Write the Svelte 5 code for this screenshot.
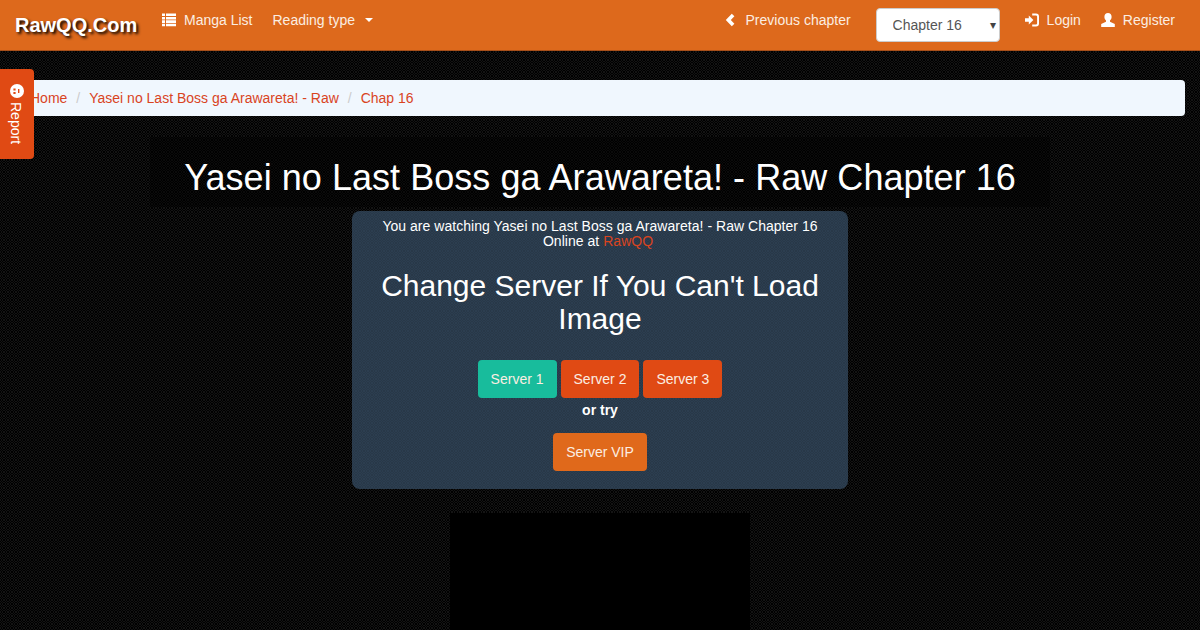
<script>
	let servers = ['Server 1', 'Server 2', 'Server 3'];
	let activeServer = $state(0);
	let chapter = $state('16');
</script>

<header class="navbar">
	<a class="brand" href="#top">RawQQ.Com</a>
	<nav class="nav">
		<a href="#list">
			<svg class="icon" viewBox="0 0 14 14"><path d="M0 .5h3v2.600H0zM4 .5h10v2.600H4zM0 3.900h3v2.600H0zM4 3.900h10v2.600H4zM0 7.300h3v2.600H0zM4 7.300h10v2.600H4zM0 10.700h3v2.600H0zM4 10.700h10v2.600H4z" /></svg>
			Manga List
		</a>
		<a href="#type">Reading type <span class="caret"></span></a>
	</nav>
	<nav class="nav right">
		<a href="#prev">
			<svg class="icon" viewBox="0 0 14 14"><path d="M7.800.8 1.800 7l6 6.200 2.600-2.500L6.800 7l3.600-3.700z" /></svg>
			Previous chapter
		</a>
		<div class="select-wrap">
			<select bind:value={chapter}>
				<option value="16">Chapter 16</option>
				<option value="15">Chapter 15</option>
			</select>
		</div>
		<a href="#login">
			<svg class="icon" viewBox="0 0 14 14"><path d="M0 5.200h3.800V2.500L8.400 7l-4.600 4.500V8.800H0z" /><path d="M7.200.6h3.800A3 3 0 0 1 14 3.600v6.800a3 3 0 0 1-3 3H7.200v-1.900h3.600a1.300 1.300 0 0 0 1.300-1.300V3.800a1.300 1.300 0 0 0-1.300-1.300H7.200z" /></svg>
			Login
		</a>
		<a href="#register">
			<svg class="icon" viewBox="0 0 14 14"><path d="M7 0c2.200 0 3.600 1.600 3.600 3.800 0 1.600-.7 2.900-1.600 3.700v1.200l4.800 2.200v3H.2v-3L5 8.700V7.500C4.100 6.700 3.400 5.400 3.400 3.800 3.400 1.600 4.800 0 7 0z" /></svg>
			Register
		</a>
	</nav>
</header>

<a class="report" href="#report">
	<svg class="face" viewBox="0 0 14 14"><circle cx="7" cy="7" r="7" fill="#fff" /><path d="M3.400 4.500h2.200v2H3.400zM3.400 8h2.200v2H3.400zM8 5h1.400v4H8z" fill="#e04a14" /></svg>
	<span>Report</span>
</a>

<main class="content">
	<ol class="breadcrumb">
		<li><a href="#home">Home</a></li>
		<li><a href="#manga">Yasei no Last Boss ga Arawareta! - Raw</a></li>
		<li><a href="#chap">Chap 16</a></li>
	</ol>

	<h1 class="title">Yasei no Last Boss ga Arawareta! - Raw Chapter 16</h1>

	<section class="panel">
		<p>You are watching Yasei no Last Boss ga Arawareta! - Raw Chapter 16 Online at <a href="#site">RawQQ</a>&nbsp;</p>
		<h2>Change Server If You Can't Load Image</h2>
		<div class="servers">
			{#each servers as server, i}
				<button class:active={activeServer === i} onclick={() => (activeServer = i)}>{server}</button>
			{/each}
		</div>
		<strong>or try</strong>
		<button class="vip">Server VIP</button>
	</section>

	<div class="page-image"></div>
</main>

<style>
	:global(body) {
		margin: 0;
		overflow: hidden;
		color: #fff;
		font: 14px/20px Helvetica, Arial, 'Liberation Sans', sans-serif;
		background: #000 url("data:image/svg+xml,%3Csvg xmlns='http://www.w3.org/2000/svg' width='8' height='8'%3E%3Cpath d='M0 4L4 0M0 2L2 0M2 4L4 2M4 8L8 4M4 6L6 4M6 8L8 6M4 0L8 4M6 0L8 2M4 2L6 4M0 4L4 8M2 4L4 6M0 6L2 8' stroke='%23fff' stroke-opacity='.08' fill='none'/%3E%3C/svg%3E");
	}

	a {
		text-decoration: none;
		color: inherit;
	}

	.navbar {
		display: flex;
		align-items: flex-start;
		height: 50px;
		background: #dd691c;
		border-bottom: 1px solid #a9501a;
	}

	.brand {
		width: 137px;
		padding: 15px 0 15px 15px;
		font-size: 20px;
		font-weight: 700;
		text-shadow: 2px 2px 3px #000;
	}

	.nav {
		display: flex;
		align-items: flex-start;
	}

	.nav.right {
		margin-left: auto;
		margin-right: 15px;
	}

	.nav a {
		display: flex;
		align-items: center;
		padding: 10px;
		color: #fbeee2;
	}

	.icon {
		width: 14px;
		height: 14px;
		margin-right: 8px;
		fill: #fff;
	}

	.caret {
		width: 0;
		height: 0;
		margin-left: 10px;
		border-top: 4px solid #fff;
		border-left: 4px solid transparent;
		border-right: 4px solid transparent;
	}

	.select-wrap {
		position: relative;
		margin: 8px 15px 0;
	}

	.select-wrap::after {
		content: '▾';
		position: absolute;
		top: 7px;
		right: 4px;
		font-size: 12px;
		color: #444;
		pointer-events: none;
	}

	select {
		display: block;
		appearance: none;
		width: 124px;
		height: 34px;
		padding: 0 16px;
		background: #fff;
		border: 1px solid #ccc;
		border-radius: 4px;
		color: #555;
		font: inherit;
	}

	.report {
		position: fixed;
		top: 69px;
		left: 0;
		display: flex;
		flex-direction: column;
		align-items: center;
		gap: 4px;
		box-sizing: border-box;
		width: 34px;
		height: 90px;
		padding: 15px 2px 0 0;
		background: #e04a14;
		border-radius: 0 4px 4px 0;
		color: #fff;
	}

	.face {
		width: 14px;
		height: 14px;
		margin-left: 2px;
	}

	.report span {
		writing-mode: vertical-rl;
		line-height: 16px;
	}

	.content {
		display: flex;
		flex-direction: column;
		align-items: center;
		padding: 29px 15px 0;
	}

	.breadcrumb {
		display: flex;
		align-self: stretch;
		margin: 0;
		padding: 8px 15px;
		list-style: none;
		background: #f0f7fe;
		border-radius: 4px;
	}

	.breadcrumb li + li::before {
		content: '/';
		padding: 0 9px;
		color: #ccc;
	}

	.breadcrumb a,
	.panel p a {
		color: #d9441f;
	}

	.title {
		box-sizing: border-box;
		width: 900px;
		margin: 21px 0 4px;
		padding: 21px 0 9px;
		background: rgba(0, 0, 0, 0.45);
		font-size: 36px;
		font-weight: 400;
		line-height: 40px;
		letter-spacing: 0.04px;
		text-align: center;
	}

	.panel {
		display: flex;
		flex-direction: column;
		align-items: center;
		box-sizing: border-box;
		width: 496px;
		height: 278px;
		padding: 8px 20px 0;
		border-radius: 8px;
		text-align: center;
		background: #2c3e50 url("data:image/svg+xml,%3Csvg xmlns='http://www.w3.org/2000/svg' width='8' height='8'%3E%3Cpath d='M0 4L4 0M0 2L2 0M2 4L4 2M4 8L8 4M4 6L6 4M6 8L8 6M4 0L8 4M6 0L8 2M4 2L6 4M0 4L4 8M2 4L4 6M0 6L2 8' stroke='%23000' stroke-opacity='.1' fill='none'/%3E%3C/svg%3E");
	}

	.panel p {
		margin: 0;
		line-height: 15px;
		letter-spacing: 0.03px;
	}

	.panel h2 {
		margin: 20px 0 25px;
		font-size: 30px;
		font-weight: 400;
		line-height: 33px;
	}

	.servers {
		display: flex;
		gap: 4px;
		margin-bottom: 2px;
	}

	button {
		height: 38px;
		padding: 0 13px;
		border: 0;
		border-radius: 4px;
		background: #e04a14;
		color: #fbeee2;
		font: inherit;
	}

	button.active {
		background: #18bc9c;
	}

	button.vip {
		margin-top: 13px;
		background: #e0691b;
	}

	.page-image {
		flex: none;
		width: 300px;
		height: 117px;
		margin-top: 24px;
		background: #000;
	}
</style>
